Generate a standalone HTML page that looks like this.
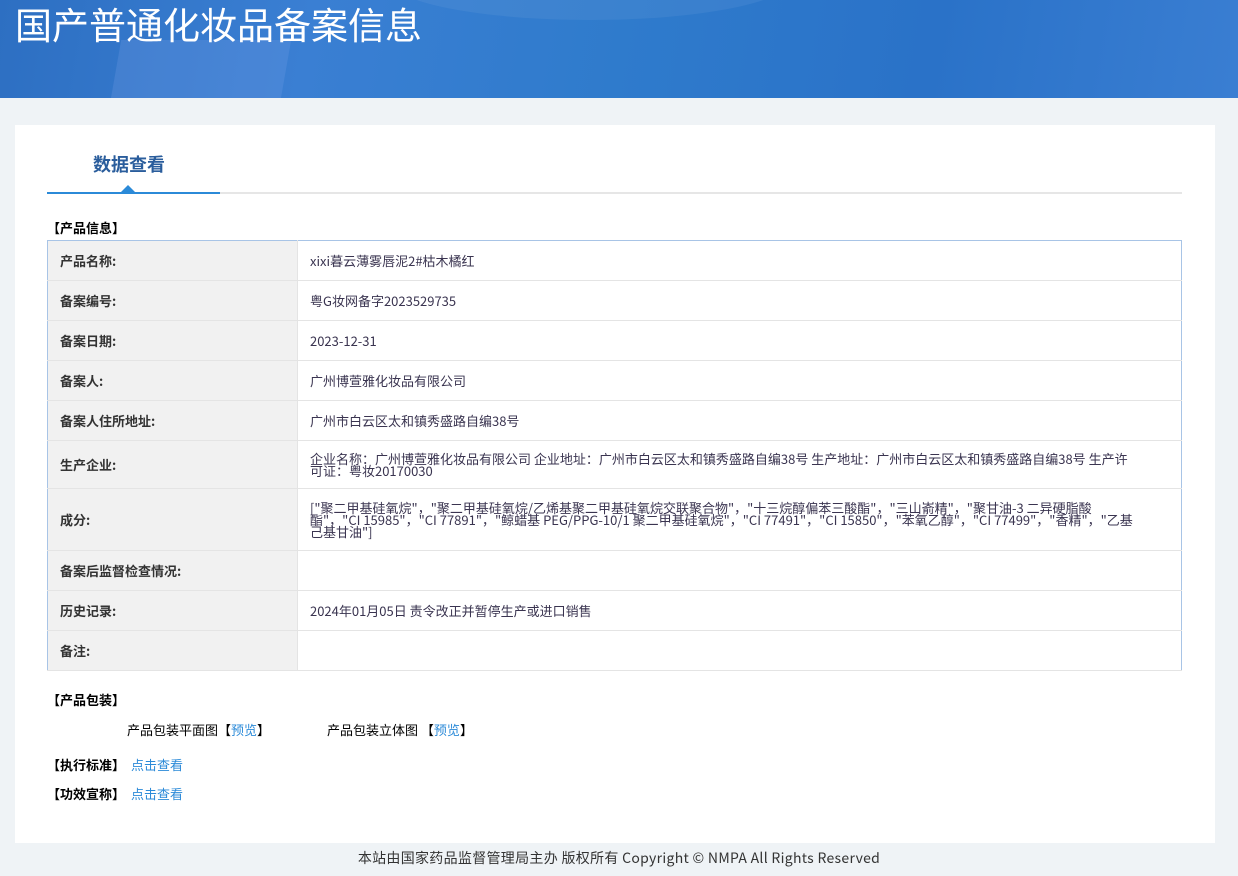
<!DOCTYPE html>
<html><head><meta charset="utf-8"><style>
*{margin:0;padding:0;box-sizing:border-box}
body{width:1238px;height:876px;background:#eff3f6;font-family:"Noto Sans CJK SC","Liberation Sans",sans-serif;font-size:13px;color:#333;position:relative;overflow:hidden}
.hd{position:absolute;left:0;top:0;width:1238px;height:98px;background:linear-gradient(100deg,#2d6fc2 0%,#3a7fd3 25%,#2f7bcc 50%,#2a72c8 75%,#3a7ed2 100%);overflow:hidden}
.hd h1{position:absolute;left:15px;top:-2px;font-size:37px;font-weight:normal;color:#fff;font-family:"Noto Sans CJK SC",sans-serif;line-height:50px}
.hd .s1{position:absolute;left:115px;top:40px;width:170px;height:70px;background:rgba(120,160,230,.25);transform:skewX(-10deg)}
.hd .c1{position:absolute;left:390px;top:-60px;width:400px;height:80px;border-radius:50%;background:rgba(255,255,255,.06)}
.card{position:absolute;left:15px;top:125px;width:1200px;height:718px;background:#fff}
.tab{position:absolute;left:78px;top:26px;font-size:18px;font-weight:bold;color:#2a5d9c;line-height:26px}
.line{position:absolute;left:32px;top:67px;width:1135px;height:2px;background:#e6e6e6}
.line b{position:absolute;left:0;top:0;width:173px;height:2px;background:#2b8ad8}
.tri{position:absolute;left:106px;top:60px;width:0;height:0;border-left:7px solid transparent;border-right:7px solid transparent;border-bottom:7px solid #2b8ad8}
.sec{position:absolute;left:32px;font-weight:bold;color:#000;font-size:13px;line-height:18px}
table{position:absolute;left:32px;top:115px;width:1135px;border-collapse:collapse;border:1px solid #a8c4e6}
td{border-bottom:1px solid #e4e4e4;padding:0 12px;line-height:12px;vertical-align:middle}
td.l{width:250px;background:#f1f1f1;font-weight:bold;border-right:1px solid #e4e4e4;color:#333}
td.v{color:#3a3450;padding-right:45px}
a{color:#2b8ad8;text-decoration:none}
.ft{position:absolute;top:848px;left:0;width:1238px;text-align:center;font-size:14px;color:#333;line-height:20px;letter-spacing:0.3px}
.t{position:absolute;line-height:18px;color:#000}
.sec a{font-weight:normal;margin-left:6px}
</style></head><body>
<div class="hd"><div class="s1"></div><div class="c1"></div><h1>国产普通化妆品备案信息</h1></div>
<div class="card">
<div class="tab">数据查看</div>
<div class="line"><b></b></div><div class="tri"></div>
<div class="sec" style="top:94px">【产品信息】</div>
<table>
<tr style="height:40px"><td class="l">产品名称:</td><td class="v">xixi暮云薄雾唇泥2#枯木橘红</td></tr>
<tr style="height:40px"><td class="l">备案编号:</td><td class="v">粤G妆网备字2023529735</td></tr>
<tr style="height:40px"><td class="l">备案日期:</td><td class="v">2023-12-31</td></tr>
<tr style="height:40px"><td class="l">备案人:</td><td class="v">广州博萱雅化妆品有限公司</td></tr>
<tr style="height:40px"><td class="l">备案人住所地址:</td><td class="v">广州市白云区太和镇秀盛路自编38号</td></tr>
<tr style="height:48px"><td class="l">生产企业:</td><td class="v">企业名称：广州博萱雅化妆品有限公司 企业地址：广州市白云区太和镇秀盛路自编38号 生产地址：广州市白云区太和镇秀盛路自编38号 生产许可证：粤妆20170030</td></tr>
<tr style="height:62px"><td class="l">成分:</td><td class="v">["聚二甲基硅氧烷"，"聚二甲基硅氧烷/乙烯基聚二甲基硅氧烷交联聚合物"，"十三烷醇偏苯三酸酯"，"三山嵛精"，"聚甘油-3 二异硬脂酸酯"，"CI 15985"，"CI 77891"，"鲸蜡基 PEG/PPG-10/1 聚二甲基硅氧烷"，"CI 77491"，"CI 15850"，"苯氧乙醇"，"CI 77499"，"香精"，"乙基己基甘油"]</td></tr>
<tr style="height:40px"><td class="l">备案后监督检查情况:</td><td class="v"></td></tr>
<tr style="height:40px"><td class="l">历史记录:</td><td class="v">2024年01月05日 责令改正并暂停生产或进口销售</td></tr>
<tr style="height:40px"><td class="l">备注:</td><td class="v"></td></tr>
</table>
<div class="sec" style="top:566px">【产品包装】</div>
<div class="t" style="left:112px;top:596px">产品包装平面图【<a>预览</a>】</div>
<div class="t" style="left:312px;top:596px">产品包装立体图 【<a>预览</a>】</div>
<div class="sec" style="top:631px">【执行标准】<a>点击查看</a></div>
<div class="sec" style="top:660px">【功效宣称】<a>点击查看</a></div>
</div>
<div class="ft">本站由国家药品监督管理局主办 版权所有 Copyright © NMPA All Rights Reserved</div>
</body></html>
